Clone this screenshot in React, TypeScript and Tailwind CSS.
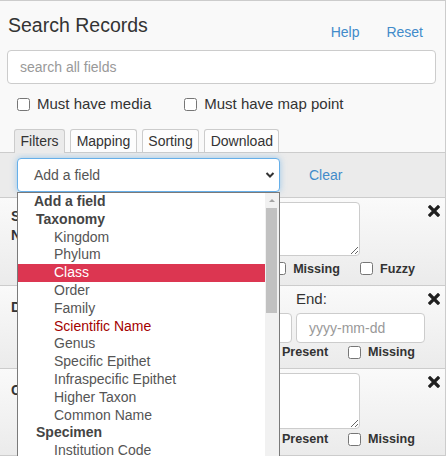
import React from "react";

const options: { label: string; kind: "placeholder" | "group" | "option"; active?: boolean; red?: boolean }[] = [
  { label: "Add a field", kind: "placeholder" },
  { label: "Taxonomy", kind: "group" },
  { label: "Kingdom", kind: "option" },
  { label: "Phylum", kind: "option" },
  { label: "Class", kind: "option", active: true },
  { label: "Order", kind: "option" },
  { label: "Family", kind: "option" },
  { label: "Scientific Name", kind: "option", red: true },
  { label: "Genus", kind: "option" },
  { label: "Specific Epithet", kind: "option" },
  { label: "Infraspecific Epithet", kind: "option" },
  { label: "Higher Taxon", kind: "option" },
  { label: "Common Name", kind: "option" },
  { label: "Specimen", kind: "group" },
  { label: "Institution Code", kind: "option" },
];

function CloseIcon() {
  return (
    <svg width="12" height="12" viewBox="0 0 12 12" className="absolute right-[5px] top-[7px]">
      <path d="M2 2 L10 10 M10 2 L2 10" stroke="#1f1f1f" strokeWidth="3.2" strokeLinecap="square" />
    </svg>
  );
}

function Check({ label }: { label: string }) {
  return (
    <label className="flex items-center gap-[7px]">
      <input type="checkbox" className="h-[13px] w-[13px]" />
      <span className="text-[12.6px] font-bold text-[#333]">{label}</span>
    </label>
  );
}

export default function App() {
  return (
    <div className="relative h-[456px] w-[447px] overflow-hidden bg-white font-['Liberation_Sans',Arial,sans-serif] text-[#333]">
      <div className="flex h-full w-[446px] flex-col border-r border-t border-[#ccc] bg-[#f9f9f9]">
        {/* Header */}
        <div className="flex h-[36px] shrink-0 items-start px-[8px]">
          <h1 className="mt-[12px] text-[19.5px] leading-[24px] text-[#333]">Search Records</h1>
          <div className="ml-auto mr-[14px] mt-[21px] flex gap-[27px] text-[14px] leading-[20px] text-[#428bca]">
            <a href="#">Help</a>
            <a href="#">Reset</a>
          </div>
        </div>

        <div className="mx-[7px] mt-[13px] flex h-[34px] w-[429px] shrink-0 items-center rounded-[4px] border border-[#ccc] bg-white pl-[12px] text-[14px] text-[#999]">
          search all fields
        </div>

        <div className="mt-[10px] flex h-[20px] shrink-0 items-center pl-[17px] text-[15px] text-[#333]">
          <label className="flex items-center gap-[7px]">
            <input type="checkbox" className="h-[13px] w-[13px]" />
            <span>Must have media</span>
          </label>
          <label className="ml-[33px] flex items-center gap-[7px]">
            <input type="checkbox" className="h-[13px] w-[13px]" />
            <span>Must have map point</span>
          </label>
        </div>

        {/* Tabs */}
        <div className="mt-[15px] flex h-[23px] shrink-0 items-start gap-[5px] pl-[14px] text-[14px] leading-[22px] text-[#333]">
          <div className="relative z-10 h-[24px] rounded-t-[3px] border border-b-0 border-[#ccc] bg-[#ebebeb] px-[5.5px]">Filters</div>
          <div className="h-[23px] rounded-t-[3px] border border-b-0 border-[#ccc] bg-[#fdfdfd] px-[5.5px]">Mapping</div>
          <div className="h-[23px] rounded-t-[3px] border border-b-0 border-[#ccc] bg-[#fdfdfd] px-[5.5px]">Sorting</div>
          <div className="h-[23px] rounded-t-[3px] border border-b-0 border-[#ccc] bg-[#fdfdfd] px-[5.5px]">Download</div>
        </div>

        {/* Filter bar */}
        <div className="flex h-[46px] shrink-0 items-start border-y border-[#ccc] bg-[#ebebeb] pl-[17px] pt-[5px]">
          <div className="flex h-[34px] w-[263px] items-center justify-between rounded-[4px] border border-[#66afe9] bg-white pl-[16px] pr-[4px] text-[14px] text-[#555] shadow-[0_0_6px_rgba(102,175,233,0.6)]">
            <span>Add a field</span>
            <svg width="10" height="8" viewBox="0 0 10 8">
              <path d="M1.5 2 L5 5.5 L8.5 2" fill="none" stroke="#333" strokeWidth="2" />
            </svg>
          </div>
          <a href="#" className="ml-[29px] mt-[7px] text-[14px] leading-[20px] text-[#428bca]">Clear</a>
        </div>

        {/* Panel 1 */}
        <div className="relative flex h-[88px] shrink-0 border-b border-[#ccc] bg-linear-to-b from-[#fafafa] to-[#ebebeb]">
          <div className="w-[100px] shrink-0 pl-[11px] pt-[9px] text-[14px] font-bold leading-[19px] text-[#333]">
            Scientific
            <br />
            Name
          </div>
          <div className="flex flex-1 flex-col pt-[4px]">
            <textarea className="h-[54px] w-[260px] rounded-[4px] border border-[#ccc] bg-white" />
            <div className="mt-[3px] flex h-[20px] items-center justify-end gap-[20px] pr-[30px]">
              <Check label="Missing" />
              <Check label="Fuzzy" />
            </div>
          </div>
          <CloseIcon />
        </div>

        {/* Panel 2 */}
        <div className="relative flex h-[83px] shrink-0 border-b border-[#ccc] bg-linear-to-b from-[#fafafa] to-[#ebebeb]">
          <div className="w-[100px] shrink-0 whitespace-nowrap pl-[11px] pt-[12px] text-[14px] font-bold leading-[19px] text-[#333]">
            Date
          </div>
          <div className="flex flex-1 flex-col pt-[3px]">
            <div className="ml-[63px] flex gap-[4px]">
              <div className="flex flex-col">
                <span className="h-[20px] text-[15px] leading-[20px] text-[#333]">Begin:</span>
                <div className="mt-[4px] flex h-[30px] w-[129px] items-center rounded-[4px] border border-[#ccc] bg-white pl-[12px] text-[14px] text-[#999]">
                  yyyy-mm-dd
                </div>
              </div>
              <div className="flex flex-col">
                <span className="h-[20px] text-[15px] leading-[20px] text-[#333]">End:</span>
                <div className="mt-[4px] flex h-[30px] w-[129px] items-center rounded-[4px] border border-[#ccc] bg-white pl-[12px] text-[14px] text-[#999]">
                  yyyy-mm-dd
                </div>
              </div>
            </div>
            <div className="flex h-[18px] items-center justify-end gap-[20px] pr-[30px]">
              <Check label="Present" />
              <Check label="Missing" />
            </div>
          </div>
          <CloseIcon />
        </div>

        {/* Panel 3 */}
        <div className="relative flex flex-1 border-b border-[#ccc] bg-linear-to-b from-[#fafafa] to-[#ebebeb]">
          <div className="w-[100px] shrink-0 pl-[11px] pt-[12px] text-[14px] font-bold leading-[19px] text-[#333]">
            Country
          </div>
          <div className="flex flex-1 flex-col pt-[4px]">
            <textarea className="h-[56px] w-[260px] rounded-[4px] border border-[#ccc] bg-white" />
            <div className="mt-[1px] flex h-[18px] items-center justify-end gap-[20px] pr-[30px]">
              <Check label="Present" />
              <Check label="Missing" />
            </div>
          </div>
          <CloseIcon />
        </div>
      </div>

      {/* Open select list */}
      <div className="absolute left-[17px] top-[192px] z-20 h-[270px] w-[263px] overflow-hidden border border-[#7a7a7a] bg-white text-[14px] leading-[17.8px]">
        <div className="mr-[14px]">
          {options.map((o) => (
            <div
              key={o.label}
              className={
                o.kind === "placeholder"
                  ? "h-[17.8px] pl-[16px] font-bold text-[#444]"
                  : o.kind === "group"
                    ? "h-[17.8px] pl-[18px] font-bold text-[#444]"
                    : o.active
                      ? "h-[17.8px] bg-[#dc3651] pl-[36px] text-white"
                      : o.red
                        ? "h-[17.8px] pl-[36px] text-[#a40000]"
                        : "h-[17.8px] pl-[36px] text-[#555]"
              }
            >
              {o.label}
            </div>
          ))}
        </div>
        {/* scrollbar */}
        <div className="absolute bottom-0 right-0 top-0 w-[14px] bg-[#f1f1f1]">
          <svg width="14" height="14" viewBox="0 0 14 14" className="absolute left-0 top-0">
            <path d="M4 9 L7 6 L10 9 Z" fill="#a3a3a3" />
          </svg>
          <div className="absolute left-[1px] right-[2px] top-[15px] h-[105px] bg-[#c1c1c1]" />
        </div>
      </div>
    </div>
  );
}
